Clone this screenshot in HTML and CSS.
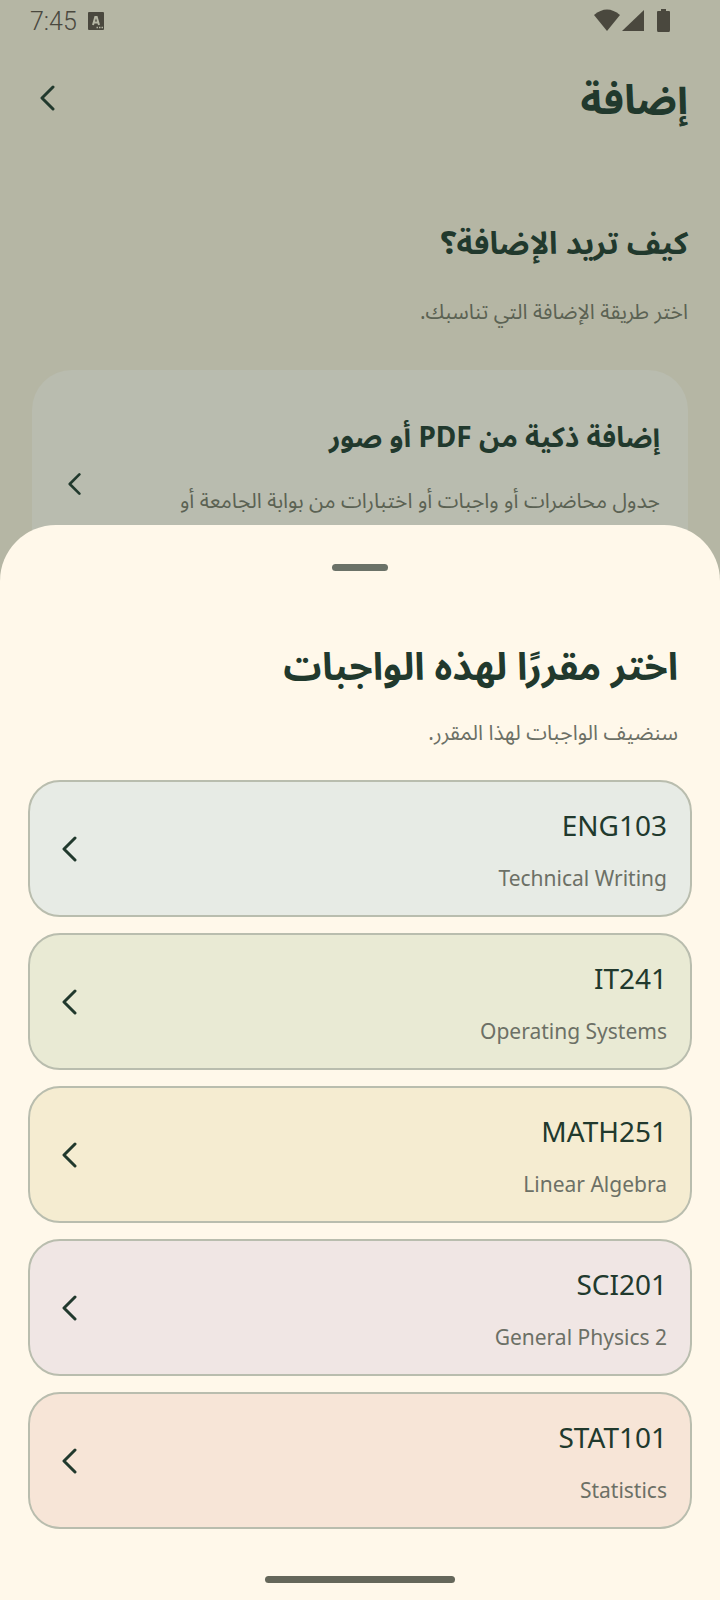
FILE: index.html
```html
<!DOCTYPE html>
<html lang="ar" dir="rtl">
<head>
  <meta charset="UTF-8" />
  <meta name="viewport" content="width=device-width, initial-scale=1" />
  <title>إضافة</title>
  <link rel="stylesheet" href="styles.css">
</head>
<body>

<div class="status-bar" dir="ltr">
  <span class="clock">7:45</span>
  <svg class="status-app" width="16" height="18" viewBox="0 0 16 18">
    <rect width="16" height="18" rx="1" fill="#4a483e" />
    <path d="M5 13 7.300 5h1.400L11 13M6 10.500h4" fill="none" stroke="#b5b6a4" stroke-width="2" />
    <path d="M8.500 15.500h1.500M11 15.500h1.500M13.500 15.500h1.500" stroke="#b5b6a4" stroke-width="1.500" />
  </svg>
  <svg class="status-icons" width="78" height="24" viewBox="0 0 78 24" fill="#4a483e">
    <path d="M0 6Q13-5 26 6L13 22z" />
    <path d="M50 1v21H28z" />
    <path d="M67 0h5v2h3q1 0 1 1v18q0 2-1 2H64q-1 0-1-2V3q0-1 1-1h3z" />
  </svg>
</div>

<header class="top-bar">
  <h1>إضافة</h1>
  <button class="back" type="button" aria-label="رجوع">
    <svg class="chevron" viewBox="0 0 16 26"><path d="M13 2 2 13l11 11" /></svg>
  </button>
</header>

<main class="page">
  <h2>كيف تريد الإضافة؟</h2>
  <p class="lead">اختر طريقة الإضافة التي تناسبك.</p>

  <button class="option" type="button">
    <span class="option-text">
      <span class="option-title">إضافة ذكية من PDF أو صور</span>
      <span class="option-desc">جدول محاضرات أو واجبات أو اختبارات من بوابة الجامعة أو</span>
    </span>
    <svg class="chevron small" viewBox="0 0 16 26"><path d="M13 2 2 13l11 11" /></svg>
  </button>
</main>

<section class="sheet" role="dialog" aria-labelledby="sheetTitle">
  <div class="handle"></div>
  <h2 id="sheetTitle">اختر مقررًا لهذه الواجبات</h2>
  <p class="sheet-desc">سنضيف الواجبات لهذا المقرر.</p>

  <div class="courses">
    <button class="course mist" type="button">
      <span class="course-text">
        <span class="code">ENG103</span>
        <span class="name">Technical Writing</span>
      </span>
      <svg class="chevron" viewBox="0 0 16 26"><path d="M13 2 2 13l11 11" /></svg>
    </button>
    <button class="course olive" type="button">
      <span class="course-text">
        <span class="code">IT241</span>
        <span class="name">Operating Systems</span>
      </span>
      <svg class="chevron" viewBox="0 0 16 26"><path d="M13 2 2 13l11 11" /></svg>
    </button>
    <button class="course sand" type="button">
      <span class="course-text">
        <span class="code">MATH251</span>
        <span class="name">Linear Algebra</span>
      </span>
      <svg class="chevron" viewBox="0 0 16 26"><path d="M13 2 2 13l11 11" /></svg>
    </button>
    <button class="course mauve" type="button">
      <span class="course-text">
        <span class="code">SCI201</span>
        <span class="name">General Physics 2</span>
      </span>
      <svg class="chevron" viewBox="0 0 16 26"><path d="M13 2 2 13l11 11" /></svg>
    </button>
    <button class="course peach" type="button">
      <span class="course-text">
        <span class="code">STAT101</span>
        <span class="name">Statistics</span>
      </span>
      <svg class="chevron" viewBox="0 0 16 26"><path d="M13 2 2 13l11 11" /></svg>
    </button>
  </div>

  <div class="home-bar"></div>
</section>

</body>
</html>
```
FILE: styles.css
```css
:root {
  --page-bg: #b5b6a4;
  --option-bg: #b9bcaf;
  --sheet-bg: #fff8ea;
  --text: #21392d;
  --page-muted: #5b6253;
  --muted: #6c7066;
  --border: #b9bdae;
}

* {
  box-sizing: border-box;
}

body {
  position: relative;
  margin: 0;
  min-height: 100vh;
  background-color: var(--page-bg);
  color: var(--text);
  font-family: "Noto Sans", "Noto Sans Arabic", "DejaVu Sans", sans-serif;
}

h1, h2, p {
  margin: 0;
}

button {
  border: none;
  background: none;
  color: inherit;
  font-family: inherit;
  text-align: start;
  cursor: pointer;
}

.status-bar {
  display: flex;
  align-items: center;
  height: 42px;
  padding: 0 48px 0 30px;
}

.clock {
  font-family: Roboto, sans-serif;
  font-size: 25px;
  font-weight: 300;
  color: #4a483e;
}

.status-app {
  margin-left: 11px;
}

.status-icons {
  margin-left: auto;
}

.top-bar {
  display: flex;
  align-items: center;
  justify-content: space-between;
  height: 112px;
  padding: 0 32px;
}

.top-bar h1 {
  font-size: 41px;
  line-height: 60px;
}

.back {
  display: flex;
  padding: 8px;
}

.chevron {
  flex: none;
  width: 16px;
  height: 26px;
  fill: none;
  stroke: var(--text);
  stroke-width: 3;
  stroke-linecap: round;
  stroke-linejoin: round;
}

.chevron.small {
  width: 14px;
  height: 24px;
}

.page {
  padding: 64px 32px 0;
}

.page h2 {
  font-size: 31px;
  line-height: 48px;
}

.lead {
  margin-top: 27px;
  font-size: 21px;
  line-height: 36px;
  color: var(--page-muted);
}

.option {
  display: flex;
  align-items: center;
  justify-content: space-between;
  width: 100%;
  margin-top: 41px;
  padding: 44px 28px 44px 36px;
  border-radius: 40px;
  background-color: var(--option-bg);
}

.option-text,
.course-text {
  display: flex;
  flex-direction: column;
}

.option-title {
  font-size: 28px;
  font-weight: 700;
  line-height: 44px;
}

/* leaves room for a second line */
.option-desc {
  min-height: 72px;
  margin-top: 24px;
  font-size: 21px;
  line-height: 36px;
  color: var(--page-muted);
}

/* bottom sheet over the page */
.sheet {
  position: absolute;
  right: 0;
  bottom: 0;
  left: 0;
  padding: 39px 28px 17px;
  border-radius: 56px 56px 0 0;
  background-color: var(--sheet-bg);
}

.handle {
  width: 56px;
  height: 7px;
  margin: 0 auto;
  border-radius: 4px;
  background-color: #6b7268;
}

.sheet h2 {
  margin-top: 64px;
  padding: 0 14px;
  font-size: 38px;
  line-height: 60px;
}

.sheet-desc {
  margin-top: 19px;
  padding: 0 14px;
  font-size: 21px;
  line-height: 36px;
  color: var(--muted);
}

.courses {
  display: flex;
  flex-direction: column;
  gap: 16px;
  margin-top: 30px;
}

.course {
  display: flex;
  align-items: center;
  justify-content: space-between;
  width: 100%;
  padding: 20px 23px 19px 32px;
  border: 2px solid var(--border);
  border-radius: 32px;
}

.code {
  font-size: 28px;
  line-height: 46px;
}

.name {
  margin-top: 12px;
  font-size: 21px;
  line-height: 36px;
  color: var(--muted);
}

.mist {
  background-color: #e7ebe5;
}

.olive {
  background-color: #e9ead4;
}

.sand {
  background-color: #f5ecd1;
}

.mauve {
  background-color: #f0e6e4;
}

.peach {
  background-color: #f7e5d7;
}

.home-bar {
  width: 190px;
  height: 7px;
  margin: 47px auto 0;
  border-radius: 4px;
  background-color: #65675a;
}
```
